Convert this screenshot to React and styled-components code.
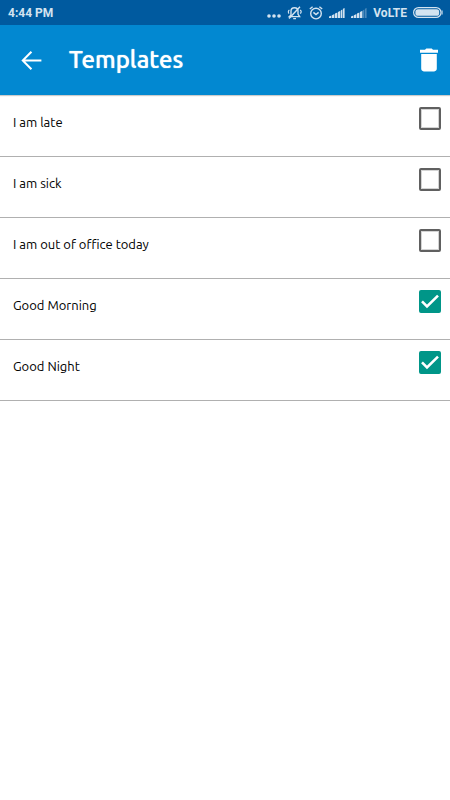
import React, { useState } from "react";
import styled, { createGlobalStyle } from "styled-components";

const GlobalStyle = createGlobalStyle`
  * {
    box-sizing: border-box;
  }
  body {
    margin: 0;
    background-color: #fff;
    font-family: Ubuntu, 'Noto Sans', sans-serif;
  }
`

const StatusBar = styled.div`
  display: flex;
  align-items: center;
  justify-content: space-between;
  height: 25px;
  padding: 0 7px 0 8px;
  background-color: #005a9f;
  color: #d3e3f0;
  font-family: Roboto, sans-serif;
  font-size: 12px;
  font-weight: 700;
`

const StatusIcons = styled.div`
  display: flex;
  align-items: center;
  gap: 6px;

  svg {
    display: block;
  }
`

const Toolbar = styled.header`
  display: flex;
  align-items: center;
  height: 70px;
  padding: 0 8px 0 18px;
  background-color: #0288d1;
  box-shadow: 0 1px 1px rgba(0, 0, 0, 0.2);
`

const Title = styled.h1`
  flex: 1;
  margin: 0 0 0 24px;
  color: white;
  font-size: 24px;
  line-height: 32px;
  font-weight: 500;
  text-shadow: 0 0 1px white;
`

const IconButton = styled.button`
  display: flex;
  padding: 0;
  border: none;
  background: none;
  color: white;
  cursor: pointer;
`

const List = styled.ul`
  margin: 0;
  padding: 1px 0 0;
  list-style: none;
`

const Row = styled.li`
  border-bottom: 1px solid #b0b0b0;
`

const RowLabel = styled.label`
  display: flex;
  align-items: flex-start;
  justify-content: space-between;
  height: 60px;
  padding: 11px 9px 0 13px;
  cursor: pointer;
`

const RowText = styled.span`
  padding-top: 5px;
  color: #000;
  font-size: 13px;
  line-height: 20px;
`

const CheckWrap = styled.span`
  position: relative;
  width: 22px;
  height: 23px;

  svg {
    position: absolute;
    top: 0;
    left: 0;
    pointer-events: none;
  }
`

const CheckInput = styled.input`
  appearance: none;
  display: block;
  width: 22px;
  height: 23px;
  margin: 0;
  border: 2px solid #606060;
  border-radius: 2px;
  background-color: white;
  box-shadow: inset 0 0 0 1px #d4d4d4;
  cursor: pointer;

  &:checked {
    border-color: #009688;
    background-color: #009688;
    box-shadow: none;
  }
`

const MutedBell = () => (
  <svg width="16" height="14" viewBox="0 0 16 14" fill="none" stroke="currentColor" strokeWidth="1.4">
    <path d="M4 9V5.2C4 3 5.4 1.7 7.5 1.7S11 3 11 5.2V8l1.6 2.6H2.4L4 9z" />
    <path d="M6.2 12.6h2.8M13 .8L2 12.6" />
    <path d="M13 4.2c1.6.4 1.6 2.8 0 3.2M2.4 4c-1.2.6-1.4 2.6-.4 3.6" strokeWidth="1.2" />
  </svg>
)

const AlarmClock = () => (
  <svg width="14" height="14" viewBox="0 0 14 14" fill="none" stroke="currentColor" strokeWidth="1.4">
    <circle cx="7" cy="7.6" r="5.3" />
    <path d="M.8 3L3.6.8M13.2 3L10.4.8M4.4 6.4L7 8.6l2.6-2.2" />
  </svg>
)

const Signal = ({ weak }) => (
  <svg width="16" height="12" viewBox="0 0 16 12" fill="currentColor">
    <path d="M0 11V9.600L2.400 8.600V11zM3 11V8.200L5.400 7V11zM6 11V6.600L8.400 5.400V11zM9 11V5L11.400 3.800V11z" />
    <path d="M12 11V3.200L13.400 2.400V11zM14 11V1.800L15.600 1V11z" opacity={weak ? 0.35 : 1} />
  </svg>
)

const templates = [
  { id: 1, text: 'I am late', checked: false },
  { id: 2, text: 'I am sick', checked: false },
  { id: 3, text: 'I am out of office today', checked: false },
  { id: 4, text: 'Good Morning', checked: true },
  { id: 5, text: 'Good Night', checked: true }
]

const App = () => {
  const [items, setItems] = useState(templates);

  const handleToggle = (id) => {
    setItems(items.map(item => (
      item.id === id ? { ...item, checked: !item.checked } : item
    )))
  }

  const handleDelete = () => {
    setItems(items.filter(item => !item.checked))
  }

  return (
    <>
      <GlobalStyle />
      <StatusBar>
        <span>4:44 PM</span>
        <StatusIcons>
          <svg width="14" height="10" viewBox="0 0 14 10" fill="currentColor">
            <circle cx="2" cy="8" r="1.8" />
            <circle cx="7" cy="8" r="1.8" />
            <circle cx="12" cy="8" r="1.8" />
          </svg>
          <MutedBell />
          <AlarmClock />
          <Signal />
          <Signal weak />
          <span>VoLTE</span>
          <svg width="30" height="11" viewBox="0 0 30 11">
            <rect x="0.6" y="0.6" width="27.400" height="9.8" rx="4.9" fill="none" stroke="currentColor" strokeWidth="1.2" />
            <rect x="2.4" y="2.200" width="23.800" height="6.600" rx="2.6" fill="currentColor" />
            <path d="M28.600 3.6h1v3.8h-1z" fill="currentColor" />
          </svg>
        </StatusIcons>
      </StatusBar>
      <Toolbar>
        <IconButton type="button" aria-label="Back">
          <svg width="27" height="27" viewBox="0 0 24 24" fill="currentColor">
            <path d="M20.8 11.1H6.4l6.2-6.2L11.3 3.6 3 12l8.3 8.4 1.3-1.3-6.2-6.2h14.4z" />
          </svg>
        </IconButton>
        <Title>Templates</Title>
        <IconButton type="button" aria-label="Delete" onClick={handleDelete}>
          <svg width="26" height="26" viewBox="0 0 26 26" fill="currentColor">
            <path d="M5.2 7h15.600v14.600c0 1.800-1 2.800-2.600 2.800H7.800c-1.600 0-2.600-1-2.600-2.800zM4 2.800h5l1.300-1.200h5.400L17 2.800h5v3H4z" />
          </svg>
        </IconButton>
      </Toolbar>
      <List>
        {items.map(item => (
          <Row key={item.id}>
            <RowLabel htmlFor={`template-${item.id}`}>
              <RowText>{item.text}</RowText>
              <CheckWrap>
                <CheckInput
                  id={`template-${item.id}`}
                  type="checkbox"
                  checked={item.checked}
                  onChange={() => handleToggle(item.id)}
                />
                {item.checked && (
                  <svg width="22" height="23" viewBox="0 0 22 23" fill="none" stroke="white" strokeWidth="2.6">
                    <path d="M3 11.400l5 5L19 5.600" />
                  </svg>
                )}
              </CheckWrap>
            </RowLabel>
          </Row>
        ))}
      </List>
    </>
  )
}

export default App;
